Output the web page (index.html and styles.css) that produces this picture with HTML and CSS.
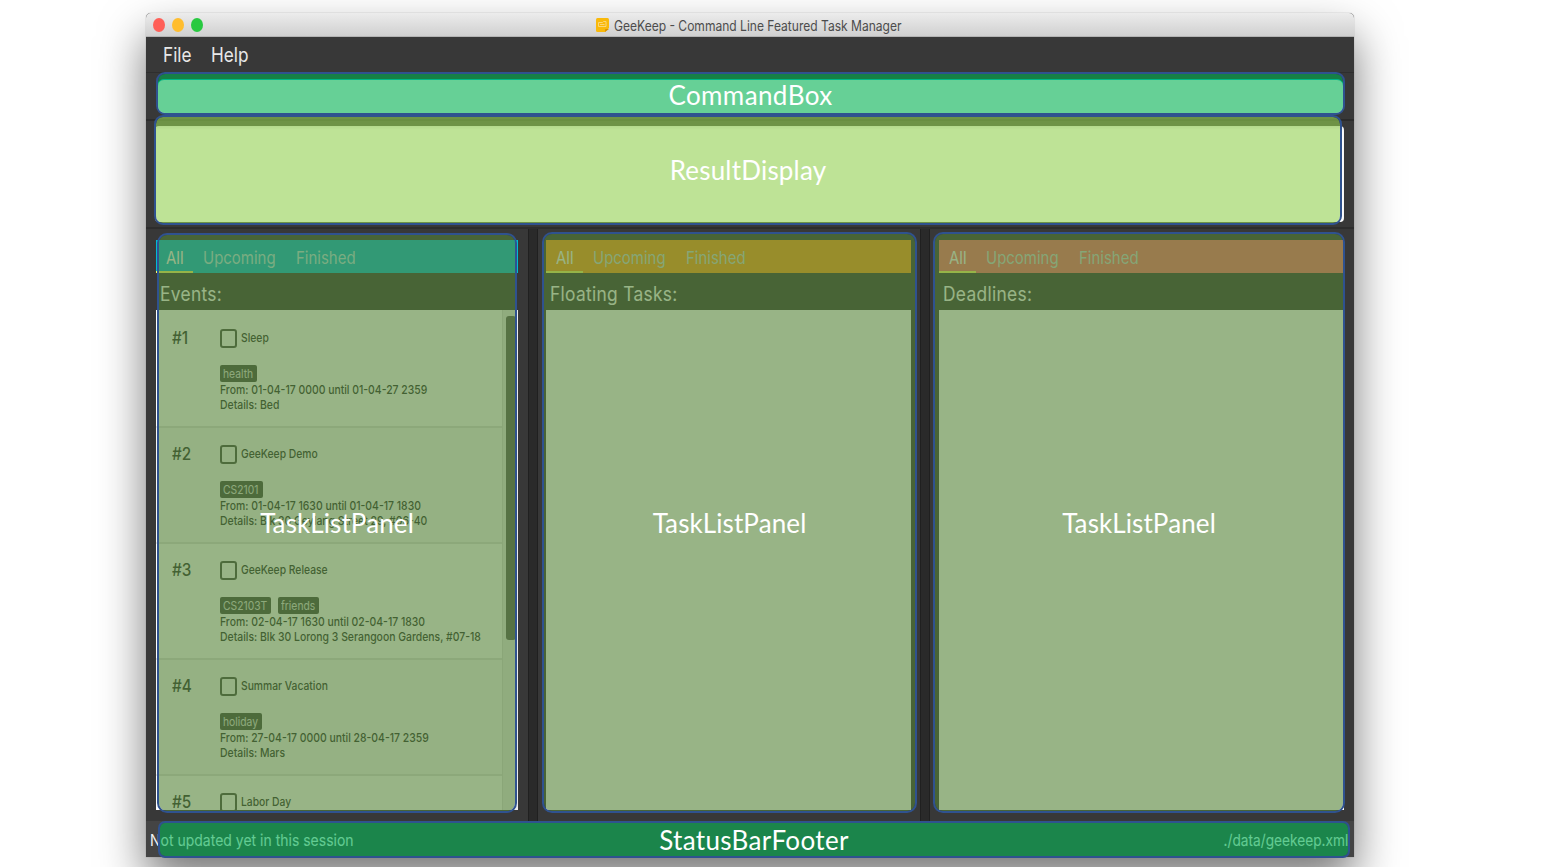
FILE: index.html
```html
<!DOCTYPE html>
<html lang="en">
<head>
<meta charset="utf-8">
<title>GeeKeep - Command Line Featured Task Manager</title>
<link rel="stylesheet" href="styles.css">
</head>
<body>
<div class="window">
  <header class="titlebar">
    <div class="lights"><i class="light red"></i><i class="light amber"></i><i class="light green"></i></div>
    <svg class="app-icon" width="13" height="14" viewBox="0 0 13 14"><path d="M1.500 0h10Q13 0 13 1.500V10l-4 4H1.500Q0 14 0 12.500v-11Q0 0 1.500 0z" fill="#f9b90a"/><path d="M9 14v-2q0-1 1-1h3z" fill="#d99100"/><path d="M2.500 4.500h4l1-1h2.500v5h-7.500zM4 6.500h4.500" fill="none" stroke="#fbd677" stroke-width="1"/></svg>
    <span class="t title">GeeKeep - Command Line Featured Task Manager</span>
  </header>
  <nav class="menubar"><span class="t menu file">File</span><span class="t menu">Help</span></nav>
  <section class="command-pane"><div class="command-input"></div></section>
  <section class="result-pane"><div class="result-box"></div></section>
  <main class="panels">
    <section class="panel events">
      <div class="tabs"><span class="tab active"><b class="t">All</b></span><b class="t upcoming">Upcoming</b><b class="t">Finished</b></div>
      <h2><span class="t">Events:</span></h2>
      <div class="list">
        <div class="items">
          <article class="item"><span class="t num">#1</span><div class="body"><div class="head"><i class="check"></i><span class="t name">Sleep</span></div><div class="tags"><span class="tag" style="width:37px"><span class="t">health</span></span></div><p class="t">From: 01-04-17 0000 until 01-04-27 2359</p><p class="t">Details: Bed</p></div></article>
          <article class="item"><span class="t num">#2</span><div class="body"><div class="head"><i class="check"></i><span class="t name">GeeKeep Demo</span></div><div class="tags"><span class="tag" style="width:43px"><span class="t">CS2101</span></span></div><p class="t">From: 01-04-17 1630 until 01-04-17 1830</p><p class="t">Details: Blk 30 Geylang Street 29, #06-40</p></div></article>
          <article class="item"><span class="t num">#3</span><div class="body"><div class="head"><i class="check"></i><span class="t name">GeeKeep Release</span></div><div class="tags"><span class="tag" style="width:51px"><span class="t">CS2103T</span></span><span class="tag" style="width:41px"><span class="t">friends</span></span></div><p class="t">From: 02-04-17 1630 until 02-04-17 1830</p><p class="t">Details: Blk 30 Lorong 3 Serangoon Gardens, #07-18</p></div></article>
          <article class="item"><span class="t num">#4</span><div class="body"><div class="head"><i class="check"></i><span class="t name">Summar Vacation</span></div><div class="tags"><span class="tag" style="width:42px"><span class="t">holiday</span></span></div><p class="t">From: 27-04-17 0000 until 28-04-17 2359</p><p class="t">Details: Mars</p></div></article>
          <article class="item"><span class="t num">#5</span><div class="body"><div class="head"><i class="check"></i><span class="t name">Labor Day</span></div></div></article>
        </div>
        <div class="scroll"><div class="thumb"></div></div>
      </div>
    </section>
    <div class="splitter"></div>
    <section class="panel floating">
      <div class="tabs"><span class="tab active"><b class="t">All</b></span><b class="t upcoming">Upcoming</b><b class="t">Finished</b></div>
      <h2><span class="t">Floating Tasks:</span></h2>
      <div class="list"></div>
    </section>
    <div class="splitter"></div>
    <section class="panel deadlines">
      <div class="tabs"><span class="tab active"><b class="t">All</b></span><b class="t upcoming">Upcoming</b><b class="t">Finished</b></div>
      <h2><span class="t">Deadlines:</span></h2>
      <div class="list"></div>
    </section>
  </main>
  <footer class="statusbar"><span class="t">Not updated yet in this session</span><span class="t path">./data/geekeep.xml</span></footer>
</div>
<div class="mark mark-command"><span>CommandBox</span></div>
<div class="mark mark-result"><span>ResultDisplay</span></div>
<div class="mark mark-list mark-events"><span>TaskListPanel</span></div>
<div class="mark mark-list mark-floating"><span>TaskListPanel</span></div>
<div class="mark mark-list mark-deadlines"><span>TaskListPanel</span></div>
<div class="mark mark-status"><span>StatusBarFooter</span></div>
</body>
</html>
```
FILE: styles.css
```css
* { box-sizing: border-box; }
html, body { height: 867px; overflow: hidden; }
body { margin: 0; padding: 13px 0 0 146px; background: #fff; font-family: Inter, "Liberation Sans", sans-serif; position: relative; }
.t { display: block; white-space: nowrap; transform: scaleX(.86); transform-origin: 0 50%; font-weight: 400; }

.window { width: 1208px; height: 844px; display: flex; flex-direction: column; background: #383838; border-radius: 5px 5px 0 0; box-shadow: 0 23px 46px rgba(0,0,0,.54), 0 0 1px rgba(0,0,0,.5); }
.titlebar { height: 24px; display: flex; align-items: center; padding-left: 7px; background: linear-gradient(#ececec, #d0d0d0); border-radius: 5px 5px 0 0; border-bottom: 1px solid #b4b4b4; }
.lights { display: flex; gap: 7px; width: 443px; }
.light { width: 12px; height: 14px; border-radius: 50%; }
.red { background: #ff5f57; }
.amber { background: #ffbd2e; }
.green { background: #28c940; }
.app-icon { margin-right: 5px; }
.title { font-size: 14px; color: #4c4c4c; padding-top: 2px; }
.menubar { height: 36px; display: flex; align-items: center; padding-left: 17px; border-bottom: 1px solid #2e2e2e; }
.menu { font-size: 20px; color: #e8e8e8; }
.file { width: 48px; }

.command-pane { height: 48px; padding: 6px 10px 7px 11px; border-bottom: 2px solid #2b2b2b; }
.command-input { height: 35px; background: #fff; border: 1px solid #00bcd4; border-radius: 7px; }
.result-pane { height: 108px; padding: 5px 10px 6px 9px; border-bottom: 2px solid #2d2d2d; }
.result-box { height: 96px; background: #fff; border-radius: 4px; box-shadow: inset 0 2px 3px rgba(0,0,0,.1); }

.panels { height: 592px; display: flex; padding-left: 10px; }
.panel { padding-top: 11px; height: 581px; display: flex; flex-direction: column; }
.events { width: 362px; margin-right: 10px; }
.floating { width: 365px; margin: 0 9px 0 8px; }
.deadlines { width: 405px; margin-left: 9px; }
.splitter { width: 10px; height: 592px; background: #2a2a2a; border-left: 1px solid #202020; border-right: 1px solid #202020; }
.tabs { height: 33px; display: flex; flex: none; font-size: 17px; line-height: 36px; color: rgba(255,255,255,.72); background: #00bcd4; }
.tabs .t { transform: scaleX(.88); }
.floating .tabs { background: #ff9d1c; color: #cfdcd8; }
.deadlines .tabs { background: #ff7070; color: #cfdcd8; }
.tab { width: 37px; margin-right: 10px; padding-left: 10px; border-bottom: 2px solid #faff64; color: #fff; }
.upcoming { width: 92.500px; }
h2 { margin: 0; height: 37px; flex: none; padding-left: 4px; font-size: 19.500px; font-weight: 400; line-height: 42px; color: #fff; }
h2 .t { transform: scaleX(.89); letter-spacing: .35px; }
.list { flex: 1; min-height: 0; display: flex; overflow: hidden; background: #fff; }
.items { width: 346px; padding-top: 1px; }
.item { height: 116px; display: flex; padding: 17px 0 0 16px; color: #2c3030; border-bottom: 2px solid #e2e2e2; background: #fff; }
.item:first-child { height: 117px; }
.item:first-child ~ .item { padding-top: 16px; }
.item:nth-child(even) { background: #f7f7f7; }
.num { width: 47.500px; font-size: 17px; line-height: 20px; font-weight: 500; transform: scaleX(.9); }
.body { font-size: 12px; }
.head { display: flex; gap: 4.500px; align-items: center; height: 20px; }
.check { width: 17px; height: 19px; border: 2px solid #484c48; border-radius: 3px; }
.name, p.t { font-weight: 500; }
.name { line-height: 18px; }
.tags { display: flex; gap: 7px; margin: 17px 0 0; height: 17px; }
.tag { background: #444a44; border-radius: 2px; color: #e4e4e4; line-height: 17px; padding-left: 3px; }
p { margin: 0; line-height: 15.300px; width: 0; }
.body p.t { transform: scaleX(.868); }
.scroll { width: 16px; background: #ebebeb; padding: 6px 2px 0 3px; border-left: 1px solid #dcdcdc; }
.thumb { width: 10px; height: 324px; border-radius: 3px; background: #5a5a5a; }

.statusbar { height: 36px; display: flex; justify-content: space-between; align-items: center; padding: 1px 6px 0 4px; background: #444; font-size: 16.500px; color: #f4f4f4; }
.statusbar .t { transform: scaleX(.848); }
.statusbar .path { transform-origin: 100% 50%; transform: scaleX(.83); }

.mark { position: absolute; display: flex; align-items: center; justify-content: center; border: 2px solid #2f528f; border-radius: 9px; color: #fff; font: 400 26px Lato, sans-serif; letter-spacing: .2px; }
.mark span { white-space: nowrap; }
.mark-command { left: 156px; top: 72px; width: 1189px; height: 43px; padding-top: 2px; letter-spacing: .4px; background: rgba(0,176,80,.6); background-clip: padding-box; }
.mark-result { left: 154px; top: 115px; width: 1188px; height: 110px; background: rgba(146,208,80,.6); background-clip: padding-box; }
.mark-list { letter-spacing: .1px; background: rgba(84,130,53,.6); background-clip: padding-box; border-radius: 10px; }
.mark-events { left: 157px; top: 233px; width: 360px; height: 580px; }
.mark-floating { left: 542px; top: 232px; width: 375px; height: 581px; }
.mark-deadlines { left: 933px; top: 232px; width: 412px; height: 581px; }
.mark-status { left: 158px; top: 821px; width: 1192px; height: 37px; letter-spacing: .35px; background: rgba(0,176,80,.6); background-clip: padding-box; border-radius: 7px; }
```
